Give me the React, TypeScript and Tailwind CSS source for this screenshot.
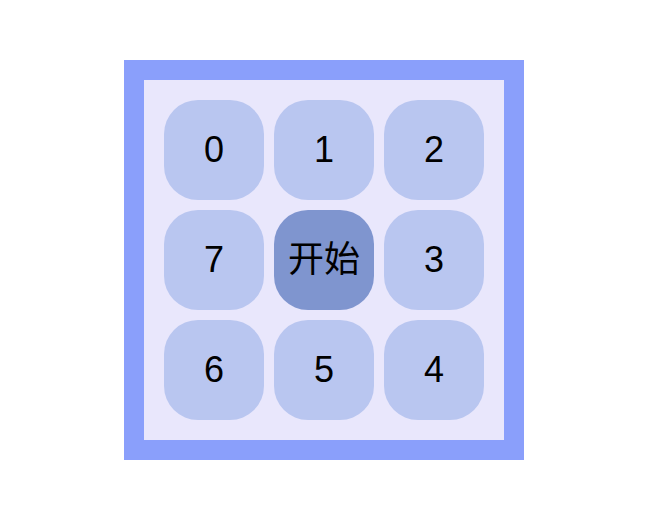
import React from "react";

const cells = ["0", "1", "2", "7", "开始", "3", "6", "5", "4"];

const App = () => {
    return (
        <div className="w-[648px] h-[520px] bg-white flex items-start justify-start">
            <div className="ml-[124px] mt-[60px] w-[400px] h-[400px] border-[20px] border-[#8a9ffb] bg-[#e9e7fc] p-[20px]">
                <div className="grid grid-cols-3 gap-[10px]">
                    {cells.map((c) => (
                        <div
                            key={c}
                            className={
                                c === "开始"
                                    ? "w-[100px] h-[100px] rounded-[34px] bg-[#7f95cf] flex items-center justify-center text-[36px] text-black font-['Liberation_Sans','Noto_Sans_CJK_SC',sans-serif]"
                                    : "w-[100px] h-[100px] rounded-[34px] bg-[#b9c6f0] flex items-center justify-center text-[36px] text-black font-['Liberation_Sans','Noto_Sans_CJK_SC',sans-serif]"
                            }
                        >
                            {c}
                        </div>
                    ))}
                </div>
            </div>
        </div>
    );
};

export default App;
